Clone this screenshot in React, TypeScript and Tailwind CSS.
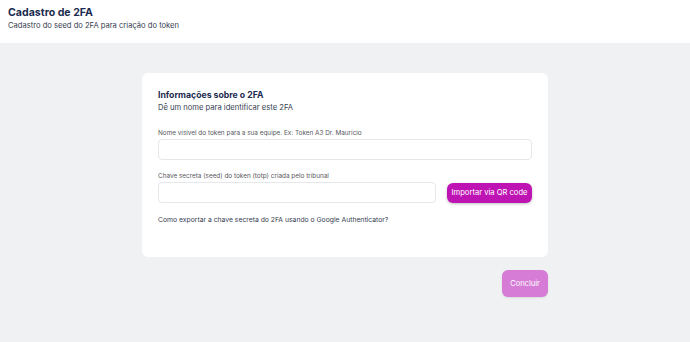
export default function App() {
  return (
    <div className="min-h-screen bg-[#f0f1f3] font-['Inter',sans-serif]">
      <header className="h-[43px] bg-white px-[8px] pt-[6px]">
        <h1 className="text-[10.6px] leading-[14px] font-bold text-[#1c2b4f]">Cadastro de 2FA</h1>
        <p className="mt-[1px] text-[7.6px] leading-[10px] text-[#374151]">
          Cadastro do seed do 2FA para criação do token
        </p>
      </header>

      <main className="flex flex-col items-center pt-[30px]">
        <div className="w-[406px] rounded-[6px] bg-white px-[16px] pt-[16px] pb-[32px]">
          <h2 className="text-[8.7px] leading-[12px] font-bold text-[#1c2b4f]">Informações sobre o 2FA</h2>
          <p className="mt-[1px] text-[7.6px] leading-[11px] text-[#374151]">Dê um nome para identificar este 2FA</p>

          <label className="mt-[16px] block text-[6.4px] leading-[9px] text-[#57595e]">
            Nome visível do token para a sua equipe. Ex: Token A3 Dr. Maurício
          </label>
          <input className="mt-[1px] block h-[21px] w-[374px] rounded-[4px] border border-[#e5e7eb] bg-white outline-none" />

          <label className="mt-[12px] block text-[6.4px] leading-[9px] text-[#57595e]">
            Chave secreta (seed) do token (totp) criada pelo tribunal
          </label>
          <div className="mt-[1px] flex items-center gap-[11px]">
            <input className="block h-[21px] w-[278px] rounded-[4px] border border-[#e5e7eb] bg-white outline-none" />
            <button className="h-[20px] w-[85px] rounded-[6px] bg-[#bf14b4] text-[7.6px] whitespace-nowrap text-white shadow-[0_1px_3px_rgba(0,0,0,0.25)]">
              Importar via QR code
            </button>
          </div>

          <p className="mt-[12px] text-[6.8px] leading-[10px] text-[#374151]">
            Como exportar a chave secreta do 2FA usando o Google Authenticator?
          </p>
        </div>

        <div className="mt-[13px] flex w-[406px] justify-end">
          <button className="h-[27px] w-[46px] rounded-[6px] bg-[#d67cd6] text-[7.5px] text-white shadow-[0_1px_2px_rgba(0,0,0,0.1)]">
            Concluir
          </button>
        </div>
      </main>
    </div>
  );
}
